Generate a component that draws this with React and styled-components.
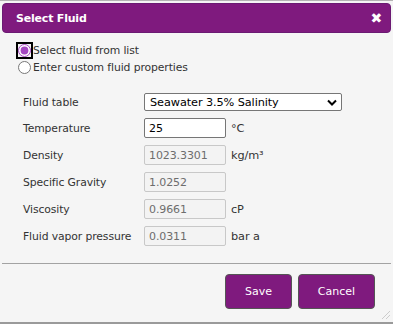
import React, { useState } from 'react';
import styled, { createGlobalStyle } from 'styled-components';

const GlobalStyle = createGlobalStyle`
  html, body {
    margin: 0;
    padding: 0;
    background: #ffffff;
  }
  body {
    font-family: "DejaVu Sans", Verdana, sans-serif;
  }
`;

const Dialog = styled.div`
  width: 393px;
  height: 324px;
  box-sizing: border-box;
  background: #f5f5f5;
  border-top: 1px solid #b4b4b4;
  border-bottom: 2px solid #9a9a9a;
  padding: 2px 2px 0;
  display: flex;
  flex-direction: column;
  position: relative;
  font-size: 10.8px;
  letter-spacing: -0.1px;
  color: #333;
`;

const TitleBar = styled.div`
  height: 30px;
  box-sizing: border-box;
  background: #7f1a7e;
  border: 1px solid #6b1a73;
  border-radius: 4px;
  display: flex;
  align-items: center;
  justify-content: space-between;
  padding: 0 8px 0 13px;
  color: #fff;
  font-weight: bold;
  font-size: 11px;
  letter-spacing: -0.2px;
`;

const Close = styled.span`
  font-size: 14px;
  font-weight: bold;
  line-height: 1;
  font-family: "DejaVu Sans", sans-serif;
`;

const Body = styled.div`
  flex: 1;
  padding: 9px 0 0 15px;
`;

const RadioRow = styled.label`
  display: flex;
  align-items: center;
  height: 17px;
  gap: 1px;
`;

const Radio = styled.input`
  margin: 0 1px 0 1px;
  width: 13px;
  height: 13px;
  accent-color: #a446c1;
  border-radius: 5px;
  outline: none;
  ${p => p.$focused && `
    box-shadow: 0 0 0 2px #000;
  `}
`;

const Form = styled.div`
  display: grid;
  grid-template-columns: 121px auto;
  row-gap: 7px;
  margin: 17px 0 0 6px;
  align-items: center;
`;

const Label = styled.div`
  color: #333;
`;

const Field = styled.div`
  display: flex;
  align-items: center;
  gap: 5px;
`;

const Select = styled.div`
  width: 198px;
  height: 18px;
  box-sizing: border-box;
  border: 1px solid #767676;
  border-radius: 2px;
  background: #fff;
  display: flex;
  align-items: center;
  justify-content: space-between;
  padding: 0 4px 0 5px;
  color: #000;
  font-size: 11.3px;
`;

const Input = styled.input`
  width: 82px;
  height: 20px;
  box-sizing: border-box;
  border: 1px solid ${p => (p.disabled ? '#c8c8c8' : '#767676')};
  border-radius: 2px;
  background: ${p => (p.disabled ? '#f3f3f3' : '#fff')};
  color: ${p => (p.disabled ? '#6d6d6d' : '#000')};
  font-family: "DejaVu Sans", Verdana, sans-serif;
  font-size: 11px;
  letter-spacing: -0.1px;
  padding: 0 4px;
  margin: 0;
`;

const Unit = styled.span`
  color: #333;
  font-size: 11.3px;
`;

const Footer = styled.div`
  border-top: 1px solid #a3a3a3;
  height: 59px;
  display: flex;
  justify-content: flex-end;
  align-items: flex-start;
  gap: 6px;
  padding: 10px 16px 0 0;
  box-sizing: border-box;
`;

const Button = styled.button`
  height: 35px;
  padding: 0;
  width: ${p => p.$w}px;
  background: #7f1a7e;
  color: #fff;
  border: 1px solid #555;
  border-radius: 4px;
  font-family: "DejaVu Sans", Verdana, sans-serif;
  font-size: 11px;
`;

const Grip = styled.svg`
  position: absolute;
  right: 2px;
  bottom: 2px;
`;

const rows = [
  { label: 'Density', value: '1023.3301', unit: 'kg/m³' },
  { label: 'Specific Gravity', value: '1.0252', unit: '' },
  { label: 'Viscosity', value: '0.9661', unit: 'cP' },
  { label: 'Fluid vapor pressure', value: '0.0311', unit: 'bar a' },
];

export default function App() {
  const [mode, setMode] = useState('list');
  return (
    <>
      <GlobalStyle />
      <Dialog>
        <TitleBar>
          <span>Select Fluid</span>
          <Close>✖</Close>
        </TitleBar>
        <Body>
          <RadioRow>
            <Radio type="radio" name="m" $focused checked={mode === 'list'} onChange={() => setMode('list')} />
            Select fluid from list
          </RadioRow>
          <RadioRow>
            <Radio type="radio" name="m" checked={mode === 'custom'} onChange={() => setMode('custom')} />
            Enter custom fluid properties
          </RadioRow>
          <Form>
            <Label>Fluid table</Label>
            <Field>
              <Select>
                <span>Seawater 3.5% Salinity</span>
                <svg width="10" height="7" viewBox="0 0 10 7">
                  <path d="M1 1.5 L5 5.5 L9 1.5" fill="none" stroke="#000" strokeWidth="2" />
                </svg>
              </Select>
            </Field>
            <Label>Temperature</Label>
            <Field>
              <Input defaultValue="25" />
              <Unit>°C</Unit>
            </Field>
            {rows.map(r => (
              <React.Fragment key={r.label}>
                <Label>{r.label}</Label>
                <Field>
                  <Input disabled value={r.value} readOnly />
                  {r.unit && <Unit>{r.unit}</Unit>}
                </Field>
              </React.Fragment>
            ))}
          </Form>
        </Body>
        <Footer>
          <Button $w={67}>Save</Button>
          <Button $w={77}>Cancel</Button>
        </Footer>
        <Grip width="10" height="10" viewBox="0 0 10 10">
          <path d="M9 1 L1 9 M9 5 L5 9" stroke="#ccc" strokeWidth="1" />
        </Grip>
      </Dialog>
    </>
  );
}
